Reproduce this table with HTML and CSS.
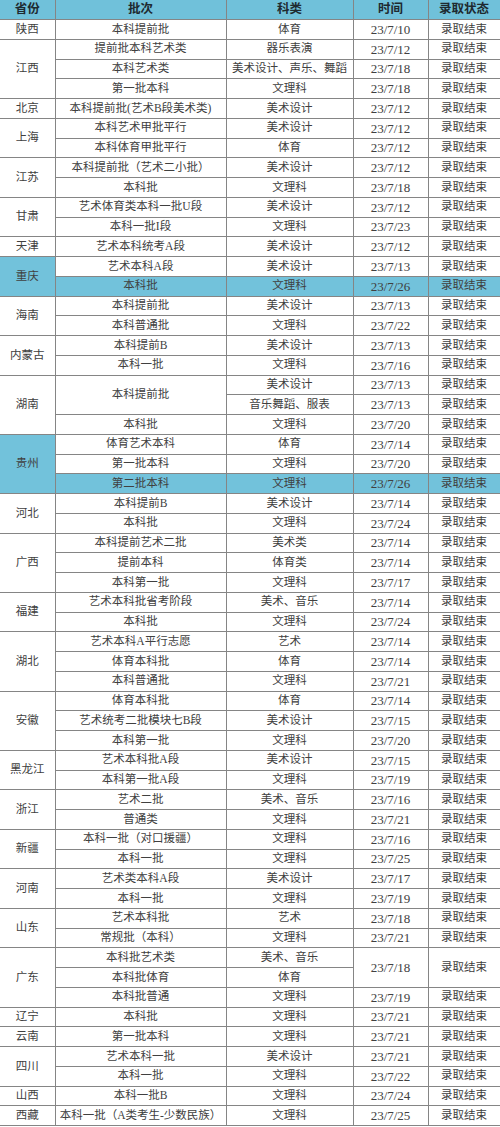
FILE: index.html
```html
<!DOCTYPE html>
<html lang="zh">
<head>
<meta charset="utf-8">
<title>录取状态</title>
<link rel="stylesheet" href="styles.css">
</head>
<body>
<table class="admit">
<colgroup><col class="c-prov"><col class="c-batch"><col class="c-subj"><col class="c-time"><col class="c-state"></colgroup>
<thead>
<tr><th>省份</th><th>批次</th><th>科类</th><th>时间</th><th>录取状态</th></tr>
</thead>
<tbody>
<tr><td>陕西</td><td>本科提前批</td><td>体育</td><td class="t">23/7/10</td><td>录取结束</td></tr>
<tr><td rowspan="3">江西</td><td>提前批本科艺术类</td><td>器乐表演</td><td class="t">23/7/12</td><td>录取结束</td></tr>
<tr><td>本科艺术类</td><td>美术设计、声乐、舞蹈</td><td class="t">23/7/18</td><td>录取结束</td></tr>
<tr><td>第一批本科</td><td>文理科</td><td class="t">23/7/18</td><td>录取结束</td></tr>
<tr><td>北京</td><td>本科提前批(艺术B段美术类)</td><td>美术设计</td><td class="t">23/7/12</td><td>录取结束</td></tr>
<tr><td rowspan="2">上海</td><td>本科艺术甲批平行</td><td>美术设计</td><td class="t">23/7/12</td><td>录取结束</td></tr>
<tr><td>本科体育甲批平行</td><td>体育</td><td class="t">23/7/12</td><td>录取结束</td></tr>
<tr><td rowspan="2">江苏</td><td>本科提前批（艺术二小批）</td><td>美术设计</td><td class="t">23/7/12</td><td>录取结束</td></tr>
<tr><td>本科批</td><td>文理科</td><td class="t">23/7/18</td><td>录取结束</td></tr>
<tr><td rowspan="2">甘肃</td><td>艺术体育类本科一批U段</td><td>美术设计</td><td class="t">23/7/12</td><td>录取结束</td></tr>
<tr><td>本科一批I段</td><td>文理科</td><td class="t">23/7/23</td><td>录取结束</td></tr>
<tr><td>天津</td><td>艺术本科统考A段</td><td>美术设计</td><td class="t">23/7/12</td><td>录取结束</td></tr>
<tr><td rowspan="2" class="hl">重庆</td><td>艺术本科A段</td><td>美术设计</td><td class="t">23/7/13</td><td>录取结束</td></tr>
<tr class="hl"><td>本科批</td><td>文理科</td><td class="t">23/7/26</td><td>录取结束</td></tr>
<tr><td rowspan="2">海南</td><td>本科提前批</td><td>美术设计</td><td class="t">23/7/13</td><td>录取结束</td></tr>
<tr><td>本科普通批</td><td>文理科</td><td class="t">23/7/22</td><td>录取结束</td></tr>
<tr><td rowspan="2">内蒙古</td><td>本科提前B</td><td>美术设计</td><td class="t">23/7/13</td><td>录取结束</td></tr>
<tr><td>本科一批</td><td>文理科</td><td class="t">23/7/16</td><td>录取结束</td></tr>
<tr><td rowspan="3">湖南</td><td rowspan="2">本科提前批</td><td>美术设计</td><td class="t">23/7/13</td><td>录取结束</td></tr>
<tr><td>音乐舞蹈、服表</td><td class="t">23/7/13</td><td>录取结束</td></tr>
<tr><td>本科批</td><td>文理科</td><td class="t">23/7/20</td><td>录取结束</td></tr>
<tr><td rowspan="3" class="hl">贵州</td><td>体育艺术本科</td><td>体育</td><td class="t">23/7/14</td><td>录取结束</td></tr>
<tr><td>第一批本科</td><td>文理科</td><td class="t">23/7/20</td><td>录取结束</td></tr>
<tr class="hl"><td>第二批本科</td><td>文理科</td><td class="t">23/7/26</td><td>录取结束</td></tr>
<tr><td rowspan="2">河北</td><td>本科提前B</td><td>美术设计</td><td class="t">23/7/14</td><td>录取结束</td></tr>
<tr><td>本科批</td><td>文理科</td><td class="t">23/7/24</td><td>录取结束</td></tr>
<tr><td rowspan="3">广西</td><td>本科提前艺术二批</td><td>美术类</td><td class="t">23/7/14</td><td>录取结束</td></tr>
<tr><td>提前本科</td><td>体育类</td><td class="t">23/7/14</td><td>录取结束</td></tr>
<tr><td>本科第一批</td><td>文理科</td><td class="t">23/7/17</td><td>录取结束</td></tr>
<tr><td rowspan="2">福建</td><td>艺术本科批省考阶段</td><td>美术、音乐</td><td class="t">23/7/14</td><td>录取结束</td></tr>
<tr><td>本科批</td><td>文理科</td><td class="t">23/7/24</td><td>录取结束</td></tr>
<tr><td rowspan="3">湖北</td><td>艺术本科A平行志愿</td><td>艺术</td><td class="t">23/7/14</td><td>录取结束</td></tr>
<tr><td>体育本科批</td><td>体育</td><td class="t">23/7/14</td><td>录取结束</td></tr>
<tr><td>本科普通批</td><td>文理科</td><td class="t">23/7/21</td><td>录取结束</td></tr>
<tr><td rowspan="3">安徽</td><td>体育本科批</td><td>体育</td><td class="t">23/7/14</td><td>录取结束</td></tr>
<tr><td>艺术统考二批模块七B段</td><td>美术设计</td><td class="t">23/7/15</td><td>录取结束</td></tr>
<tr><td>本科第一批</td><td>文理科</td><td class="t">23/7/20</td><td>录取结束</td></tr>
<tr><td rowspan="2">黑龙江</td><td>艺术本科批A段</td><td>美术设计</td><td class="t">23/7/15</td><td>录取结束</td></tr>
<tr><td>本科第一批A段</td><td>文理科</td><td class="t">23/7/19</td><td>录取结束</td></tr>
<tr><td rowspan="2">浙江</td><td>艺术二批</td><td>美术、音乐</td><td class="t">23/7/16</td><td>录取结束</td></tr>
<tr><td>普通类</td><td>文理科</td><td class="t">23/7/21</td><td>录取结束</td></tr>
<tr><td rowspan="2">新疆</td><td>本科一批（对口援疆）</td><td>文理科</td><td class="t">23/7/16</td><td>录取结束</td></tr>
<tr><td>本科一批</td><td>文理科</td><td class="t">23/7/25</td><td>录取结束</td></tr>
<tr><td rowspan="2">河南</td><td>艺术类本科A段</td><td>美术设计</td><td class="t">23/7/17</td><td>录取结束</td></tr>
<tr><td>本科一批</td><td>文理科</td><td class="t">23/7/19</td><td>录取结束</td></tr>
<tr><td rowspan="2">山东</td><td>艺术本科批</td><td>艺术</td><td class="t">23/7/18</td><td>录取结束</td></tr>
<tr><td>常规批（本科）</td><td>文理科</td><td class="t">23/7/21</td><td>录取结束</td></tr>
<tr><td rowspan="3">广东</td><td>本科批艺术类</td><td>美术、音乐</td><td rowspan="2" class="t">23/7/18</td><td rowspan="2">录取结束</td></tr>
<tr><td>本科批体育</td><td>体育</td></tr>
<tr><td>本科批普通</td><td>文理科</td><td class="t">23/7/19</td><td>录取结束</td></tr>
<tr><td>辽宁</td><td>本科批</td><td>文理科</td><td class="t">23/7/21</td><td>录取结束</td></tr>
<tr><td>云南</td><td>第一批本科</td><td>文理科</td><td class="t">23/7/21</td><td>录取结束</td></tr>
<tr><td rowspan="2">四川</td><td>艺术本科一批</td><td>美术设计</td><td class="t">23/7/21</td><td>录取结束</td></tr>
<tr><td>本科一批</td><td>文理科</td><td class="t">23/7/22</td><td>录取结束</td></tr>
<tr><td>山西</td><td>本科一批B</td><td>文理科</td><td class="t">23/7/24</td><td>录取结束</td></tr>
<tr><td>西藏</td><td>本科一批（A类考生-少数民族）</td><td>文理科</td><td class="t">23/7/25</td><td>录取结束</td></tr>
</tbody>
</table>
</body>
</html>
```
FILE: styles.css
```css
html, body {
  margin: 0;
  padding: 0;
  background: #ffffff;
}
.admit {
  width: 500px;
  table-layout: fixed;
  border-collapse: collapse;
  font-family: "Liberation Serif", "Noto Sans CJK SC", serif;
  font-size: 11.5px;
  color: #404040;
}
.c-prov { width: 55px; }
.c-batch { width: 171px; }
.c-subj { width: 127px; }
.c-time { width: 75px; }
.c-state { width: 72px; }
.admit th,
.admit td {
  border: 1px solid #858585;
  padding: 0;
  text-align: center;
  vertical-align: middle;
  line-height: 1;
  white-space: nowrap;
  overflow: hidden;
}
.admit th {
  height: 19px;
  background: #70c1da;
  color: #1e2a30;
  font-weight: bold;
  font-size: 12.5px;
}
.admit td {
  height: 18.75px;
}
.admit td.t {
  font-size: 13px;
}
.admit .hl,
.admit tr.hl td {
  background: #72c2db;
}
.admit tr:first-child th {
  border-top: 0;
}
.admit th:first-child,
.admit td:first-child {
  border-left: 0;
}
```
